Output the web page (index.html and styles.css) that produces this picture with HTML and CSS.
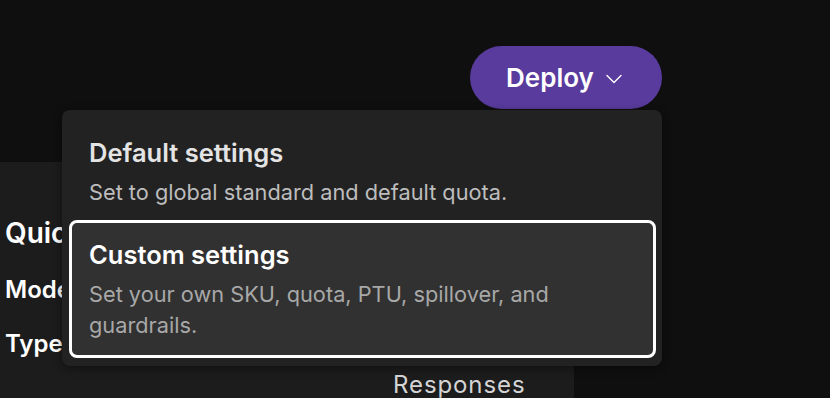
FILE: index.html
```html
<!DOCTYPE html>
<html lang="en">
<head>
<meta charset="utf-8">
<title>Deploy</title>
<link rel="stylesheet" href="styles.css">
</head>
<body>
<div class="page">
  <header class="topbar">
    <button class="deploy-btn" type="button">
      <span class="deploy-label">Deploy</span>
      <svg class="chev" width="16" height="10" viewBox="0 0 16 10" aria-hidden="true"><path d="M1 1.5 L8 8.5 L15 1.5" fill="none" stroke="#ffffff" stroke-width="1.4" stroke-linecap="round" stroke-linejoin="round"/></svg>
    </button>
  </header>

  <section class="panel">
    <h2 class="panel-title">Quick deploy</h2>
    <div class="field-list">
      <div class="field-label">Model</div>
      <div class="field-label">Type</div>
    </div>
    <div class="tab-row">
      <span class="tab">Responses</span>
    </div>
  </section>

  <div class="menu" role="menu">
    <div class="menu-item" role="menuitem">
      <div class="item-title">Default settings</div>
      <div class="item-desc">Set to global standard and default quota.</div>
    </div>
    <div class="menu-item selected" role="menuitem">
      <div class="item-title">Custom settings</div>
      <div class="item-desc">Set your own SKU, quota, PTU, spillover, and guardrails.</div>
    </div>
  </div>
</div>
</body>
</html>
```

FILE: styles.css
```css
* { box-sizing: border-box; }
html, body {
  margin: 0;
  padding: 0;
  background: #0f0f0f;
  font-family: "Inter", "Noto Sans", sans-serif;
  color: #ffffff;
}
.page {
  position: relative;
  width: 830px;
  height: 398px;
  overflow: hidden;
}
.topbar {
  display: flex;
  justify-content: flex-end;
  padding: 46px 168px 0 0;
}
.deploy-btn {
  display: flex;
  align-items: center;
  justify-content: center;
  gap: 12px;
  width: 192px;
  height: 63px;
  border: none;
  border-radius: 32px;
  background: #593b9d;
  color: #ffffff;
  font-family: inherit;
  font-size: 26px;
  font-weight: 600;
  padding: 0 4px 0 0;
  cursor: pointer;
}
.deploy-label { line-height: 32px; }
.chev { margin-top: 3px; }

.panel {
  margin-top: 53px;
  width: 574px;
  height: 300px;
  background: #1c1c1c;
  padding: 54px 0 0 5px;
}
.panel-title {
  margin: 0;
  font-size: 28px;
  font-weight: 600;
  line-height: 34px;
  white-space: nowrap;
}
.field-list {
  display: flex;
  flex-direction: column;
  gap: 24px;
  margin-top: 25px;
  font-size: 24px;
  font-weight: 600;
  line-height: 30px;
}
.tab-row {
  margin-top: 11px;
  padding-left: 388px;
}
.tab {
  font-size: 24px;
  line-height: 30px;
  color: #d4d4d4;
  letter-spacing: 0.9px;
}

.menu {
  position: absolute;
  left: 62px;
  top: 110px;
  width: 600px;
  height: 256px;
  background: #222222;
  border-radius: 8px;
  padding: 7px 6px 8px 7px;
  box-shadow: 0 2px 10px rgba(0, 0, 0, 0.45);
  display: flex;
  flex-direction: column;
}
.menu-item {
  border: 3px solid transparent;
  border-radius: 8px;
  padding: 17px 17px 14px;
}
.menu-item:first-child {
  padding: 18px 17px 9px;
}
.item-title {
  font-size: 25.5px;
  font-weight: 600;
  line-height: 30px;
  color: #e4e4e4;
}
.item-desc {
  margin-top: 9px;
  font-size: 21.75px;
  line-height: 31px;
  color: #bdbdbd;
}
.menu-item.selected {
  background: #313131;
  border-color: #ffffff;
}
.menu-item.selected .item-title { color: #ffffff; }
.menu-item.selected .item-desc { color: #a8a8a8; }
```
